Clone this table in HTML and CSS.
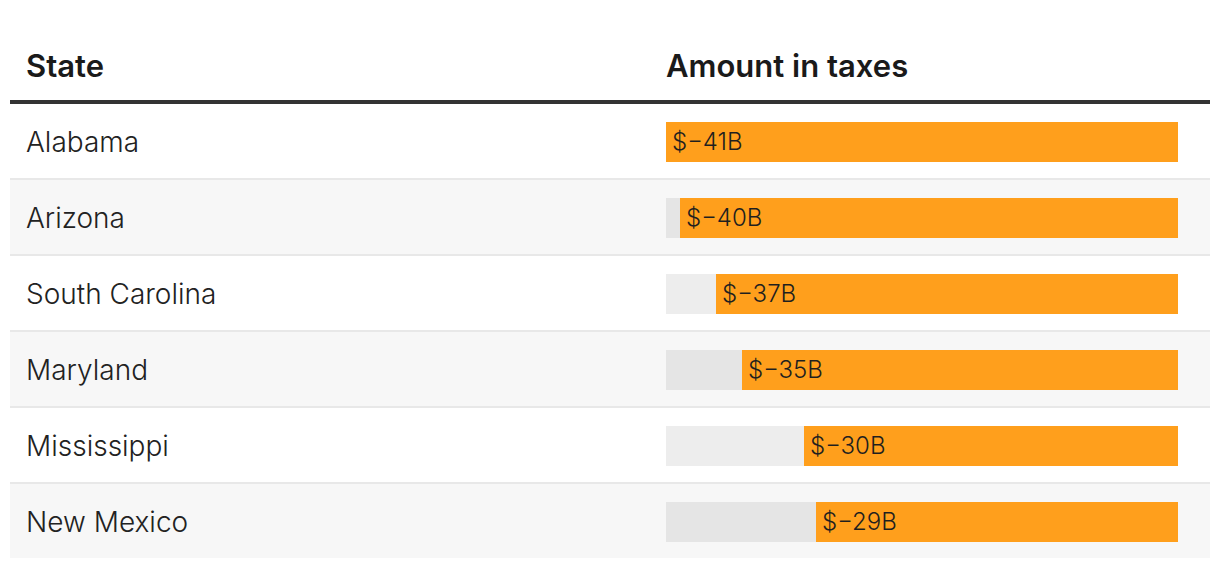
FILE: index.html
```html
<!DOCTYPE html>
<html lang="en">
<head>
<meta charset="utf-8">
<title>Amount in taxes by state</title>
<link rel="stylesheet" href="styles.css">
</head>
<body>
<div class="table">
  <div class="row head">
    <div class="cell name">State</div>
    <div class="cell value">Amount in taxes</div>
  </div>
  <div class="row">
    <div class="cell name">Alabama</div>
    <div class="cell value"><div class="track"><div class="bar" style="width:100%">$−41B</div></div></div>
  </div>
  <div class="row alt">
    <div class="cell name">Arizona</div>
    <div class="cell value"><div class="track"><div class="bar" style="width:97.27%">$−40B</div></div></div>
  </div>
  <div class="row">
    <div class="cell name">South Carolina</div>
    <div class="cell value"><div class="track"><div class="bar" style="width:90.23%">$−37B</div></div></div>
  </div>
  <div class="row alt">
    <div class="cell name">Maryland</div>
    <div class="cell value"><div class="track"><div class="bar" style="width:85.16%">$−35B</div></div></div>
  </div>
  <div class="row">
    <div class="cell name">Mississippi</div>
    <div class="cell value"><div class="track"><div class="bar" style="width:73.05%">$−30B</div></div></div>
  </div>
  <div class="row alt last">
    <div class="cell name">New Mexico</div>
    <div class="cell value"><div class="track"><div class="bar" style="width:70.7%">$−29B</div></div></div>
  </div>
</div>
</body>
</html>
```
FILE: styles.css
```css
* { box-sizing: border-box; }
html, body { margin: 0; padding: 0; background: #fff; }
body {
  font-family: Inter, "Noto Sans", sans-serif;
  color: #1f1f1f;
}
.table {
  margin: 0 10px;
  width: 1200px;
}
.row {
  display: grid;
  grid-template-columns: 640px 560px;
  align-items: center;
  height: 76px;
  padding-top: 2px;
  border-bottom: 2px solid #e8e8e8;
}
.row.alt { background: #f7f7f7; }
.row.last { border-bottom: none; height: 74px; }
.row.head {
  height: 104px;
  padding-top: 0;
  align-items: end;
  border-bottom: 4px solid #333;
}
.cell { padding: 0 16px; }
.head .cell {
  font-size: 31px;
  font-weight: 600;
  line-height: 36px;
  padding-bottom: 16px;
  color: #1a1a1a;
}
.name {
  font-size: 28px;
  font-weight: 300;
  line-height: 34px;
  color: #222;
}
.value { padding-right: 32px; }
.track {
  display: flex;
  justify-content: flex-end;
  height: 40px;
  background: rgba(0, 0, 0, 0.07);
}
.bar {
  background: #ff9f1c;
  height: 40px;
  line-height: 40px;
  padding-left: 6px;
  font-size: 24px;
  font-weight: 300;
  color: #1f1f1f;
  white-space: nowrap;
}
```
